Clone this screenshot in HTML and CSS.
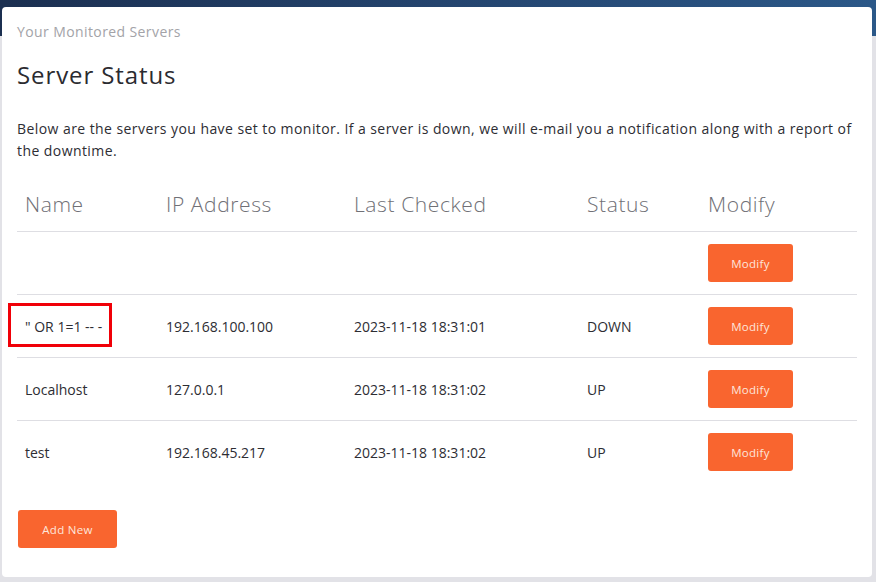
FILE: index.html
```html
<!DOCTYPE html>
<html lang="en">
<head>
<meta charset="utf-8">
<title>Server Status</title>
<link rel="stylesheet" href="styles.css">
</head>
<body>
<main class="card">
  <p class="kicker">Your Monitored Servers</p>
  <h1 class="title">Server Status</h1>
  <p class="intro">Below are the servers you have set to monitor. If a server is down, we will e-mail you a notification along with a report of the downtime.</p>
  <table class="servers">
    <colgroup>
      <col class="c-name"><col class="c-ip"><col class="c-time"><col class="c-status"><col class="c-mod">
    </colgroup>
    <thead>
      <tr><th>Name</th><th>IP Address</th><th>Last Checked</th><th>Status</th><th>Modify</th></tr>
    </thead>
    <tbody>
      <tr><td></td><td></td><td></td><td></td><td><button class="btn">Modify</button></td></tr>
      <tr><td><span class="flag">" OR 1=1 -- -</span></td><td>192.168.100.100</td><td>2023-11-18 18:31:01</td><td>DOWN</td><td><button class="btn">Modify</button></td></tr>
      <tr><td>Localhost</td><td>127.0.0.1</td><td>2023-11-18 18:31:02</td><td>UP</td><td><button class="btn">Modify</button></td></tr>
      <tr><td>test</td><td>192.168.45.217</td><td>2023-11-18 18:31:02</td><td>UP</td><td><button class="btn">Modify</button></td></tr>
    </tbody>
  </table>
  <div class="actions"><button class="btn btn-add">Add New</button></div>
</main>
</body>
</html>
```

FILE: styles.css
```css
html, body { margin: 0; padding: 0; }
body {
  background: linear-gradient(to right, #1b2f50 0%, #24446e 50%, #2b5888 100%) no-repeat top left / 100% 36px, #e2e2e7;
  font-family: "Open Sans", "Noto Sans", sans-serif;
  color: #2d2d33;
  height: 582px;
  overflow: hidden;
}
.card {
  display: block;
  box-sizing: border-box;
  margin: 7px 4px 0 2px;
  height: 570px;
  background: #fff;
  border-radius: 4px;
  padding: 15px 15px 0 15px;
}
.kicker {
  margin: 0;
  font-size: 14px;
  line-height: 20px;
  letter-spacing: 0.4px;
  color: #a3a3a8;
}
.title {
  margin: 18px 0 0 0;
  font-size: 24px;
  line-height: 30px;
  font-weight: 400;
  letter-spacing: 0.9px;
  color: #2b2b30;
}
.intro {
  margin: 28px 0 0 0;
  font-size: 14px;
  line-height: 22px;
  letter-spacing: 0.43px;
  color: #2d2d33;
}
.servers {
  margin-top: 15px;
  width: 840px;
  border-collapse: collapse;
  table-layout: fixed;
}
.c-name { width: 141px; }
.c-ip { width: 188px; }
.c-time { width: 233px; }
.c-status { width: 121px; }
.c-mod { width: 157px; }
.servers th {
  text-align: left;
  font-weight: 300;
  font-size: 21px;
  letter-spacing: 0.6px;
  color: #707076;
  padding: 12px 8px;
  height: 30px;
  line-height: 30px;
  border-bottom: 1px solid #dedee3;
}
.servers td {
  padding: 0 8px;
  height: 62px;
  font-size: 14px;
  color: #2d2d33;
  border-bottom: 1px solid #dedee3;
  vertical-align: middle;
}
.servers tbody tr:last-child td { border-bottom: none; }
.flag {
  position: relative;
}
.flag::after {
  content: "";
  position: absolute;
  box-sizing: border-box;
  left: -17px;
  top: -14px;
  width: 104px;
  height: 44px;
  border: 3px solid #f00008;
}
.btn {
  background: #f9652f;
  color: #fde6dc;
  border: none;
  border-radius: 3px;
  font-family: inherit;
  font-size: 11.5px;
  letter-spacing: 0.3px;
  width: 85px;
  height: 38px;
  padding: 0;
  cursor: pointer;
}
.actions { margin-top: 27px; padding-left: 1px; }
.btn-add { width: 99px; }
```
